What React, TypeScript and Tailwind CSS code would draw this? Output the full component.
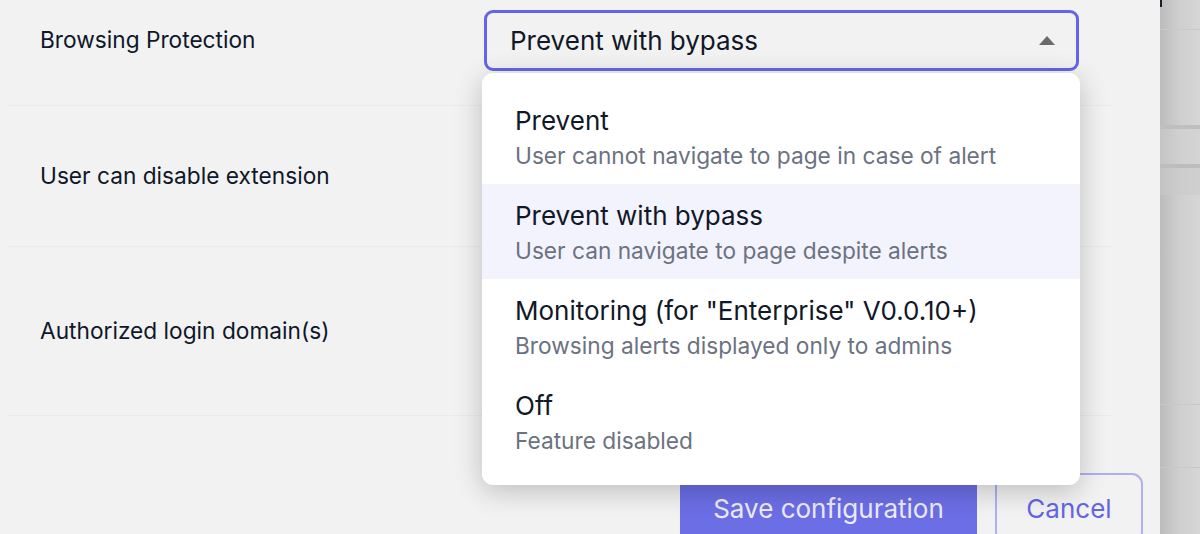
const OPTIONS = [
  { title: "Prevent", desc: "User cannot navigate to page in case of alert" },
  { title: "Prevent with bypass", desc: "User can navigate to page despite alerts" },
  { title: 'Monitoring (for "Enterprise" V0.0.10+)', desc: "Browsing alerts displayed only to admins" },
  { title: "Off", desc: "Feature disabled" },
];

const SELECTED = "Prevent with bypass";

function ProtectionSelect() {
  return (
    <div className="relative w-[595px]">
      <button className="flex h-[61px] w-full items-center justify-between rounded-[9px] border-[3px] border-[#6565e6] bg-[#f2f2f2] pl-[23px] pr-[21px] text-left">
        <span className="text-[26px] leading-[32px] text-[#111827]">{SELECTED}</span>
        <svg width="16" height="9" viewBox="0 0 16 9" className="mb-[1px]">
          <path d="M8 0 L16 9 L0 9 Z" fill="#6b6b6b" />
        </svg>
      </button>

      {/* open listbox */}
      <ul className="absolute left-[-2px] top-[63px] z-10 w-[598px] rounded-[11px] bg-white py-[16px] shadow-[0_6px_28px_rgba(0,0,0,0.22)]">
        {OPTIONS.map((o) => (
          <li
            key={o.title}
            className={`h-[95px] px-[33px] pt-[15px] ${o.title === SELECTED ? "bg-[#f3f3fd]" : ""}`}
          >
            <div className="text-[26px] leading-[34px] text-[#111827]">{o.title}</div>
            <div className="mt-[3px] text-[22.7px] leading-[30px] text-[#6b7280]">{o.desc}</div>
          </li>
        ))}
      </ul>
    </div>
  );
}

export default function App() {
  return (
    <div className="flex h-[534px] w-[1200px] overflow-hidden bg-[#f2f2f2] font-['Inter','Liberation_Sans',sans-serif]">
      <div className="w-[1160px] shrink-0">
        <div className="ml-2 w-[1104px]">
          <div className="flex h-[106px] items-start border-b border-[#ebebeb] pl-8 pt-[10px]">
            <div className="w-[444px] pt-[15px] text-[22.7px] leading-[30px] text-[#0f172a]">Browsing Protection</div>
            <ProtectionSelect />
          </div>
          <div className="flex h-[141px] items-center border-b border-[#ebebeb] pl-8">
            <div className="text-[22.7px] leading-[30px] text-[#0f172a]">User can disable extension</div>
          </div>
          <div className="flex h-[169px] items-center border-b border-[#ebebeb] pl-8">
            <div className="text-[22.7px] leading-[30px] text-[#0f172a]">Authorized login domain(s)</div>
          </div>
        </div>
        <div className="mt-[57px] flex justify-end gap-[18px] pr-[17px]">
          <button className="h-[70px] w-[297px] rounded-[10px] bg-[#6c6ee6] text-[26px] text-[#ececf8]">
            Save configuration
          </button>
          <button className="h-[70px] w-[148px] rounded-[11px] border-2 border-[#aeb0f2] text-[26px] text-[#6366e0]">
            Cancel
          </button>
        </div>
      </div>

      {/* backdrop page peeking at the right */}
      <div className="relative w-[40px] shrink-0 bg-gradient-to-r from-[#bcbcbc] via-[#cfcfcf] to-[#d6d6d6]">
        <div className="absolute left-0 top-0 h-[7px] w-[2px] bg-[#1c1c2c]" />
        <div className="h-[30px] border-b border-[#c9c9c9]" />
        <div className="h-[95px]" />
        <div className="h-[4px] bg-[#bfbfbf]" />
        <div className="h-[35px] bg-[#d2d2d2]/40" />
        <div className="h-[4px] bg-[#bdbdbd]" />
        <div className="h-[27px] bg-[#cacaca]/50" />
        <div className="h-[210px] border-b border-[#c8c8c8]" />
        <div className="h-[63px] border-b border-[#c8c8c8]" />
      </div>
    </div>
  );
}
